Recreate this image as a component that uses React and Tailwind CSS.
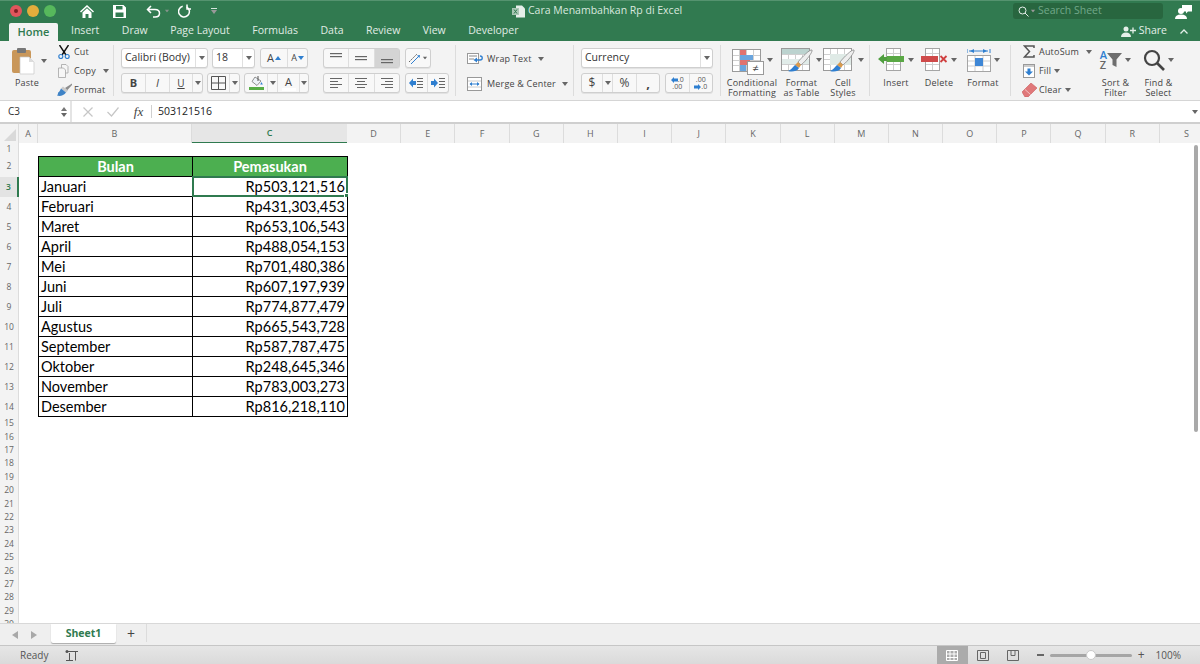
const ui = { fontFamily: '"Open Sans", "Noto Sans", sans-serif' };

const columns = ["D", "E", "F", "G", "H", "I", "J", "K", "L", "M", "N", "O", "P", "Q", "R", "S"];

const income = [
  ["Januari", "Rp503,121,516"],
  ["Februari", "Rp431,303,453"],
  ["Maret", "Rp653,106,543"],
  ["April", "Rp488,054,153"],
  ["Mei", "Rp701,480,386"],
  ["Juni", "Rp607,197,939"],
  ["Juli", "Rp774,877,479"],
  ["Agustus", "Rp665,543,728"],
  ["September", "Rp587,787,475"],
  ["Oktober", "Rp248,645,346"],
  ["November", "Rp783,003,273"],
  ["Desember", "Rp816,218,110"],
];

const emptyRows = [15, 16, 17, 18, 19, 20, 21, 22, 23, 24, 25, 26, 27, 28, 29, 30];

function Caret({ className = "" }) {
  return (
    <svg width="6" height="4" viewBox="0 0 6 4" className={`shrink-0 ${className}`}>
      <path d="M0 0h6L3 4z" fill="#666" />
    </svg>
  );
}

function Group({ className = "", children }) {
  return (
    <div className={`flex h-[20px] shrink-0 rounded-[3px] border border-[#cfcfcf] bg-[#f8f8f8] shadow-[0_1px_0_#e2e2e2] ${className}`}>
      {children}
    </div>
  );
}

function Cell({ className = "", active, children }) {
  return (
    <div className={`flex items-center justify-center border-r border-[#dedede] last:border-r-0 ${active ? "bg-[#d4d4d4]" : ""} ${className}`}>
      {children}
    </div>
  );
}

function Lines({ widths, align = "left", gap = 2, color = "#666" }) {
  return (
    <svg width="14" height="12" viewBox="0 0 14 12">
      {widths.map((w, i) => {
        const x = align === "left" ? 1 : align === "right" ? 13 - w : 7 - w / 2;
        return <rect key={i} x={x} y={1 + i * (gap + 1)} width={w} height="1" fill={color} />;
      })}
    </svg>
  );
}

function VAlign({ y }) {
  return (
    <svg width="14" height="14" viewBox="0 0 14 14">
      <rect x="1" y={y} width="12" height="1.2" fill="#666" />
      <rect x="1" y={y + 3} width="12" height="1.2" fill="#666" />
    </svg>
  );
}

function Indent({ flip }) {
  return (
    <svg width="16" height="12" viewBox="0 0 16 12">
      <path d={flip ? "M1 4h3V1.500l4 4.500-4 4.500V8H1z" : "M8 4H5V1.500L1 6l4 4.500V8h3z"} fill="#2f7fd0" />
      <path d="M9 1.500h6M9 4.500h6M9 7.500h6M9 10.500h6" stroke="#666" strokeWidth="1" />
    </svg>
  );
}

function SmallRow({ icon, label, caret, caretClass = "ml-[7px]" }) {
  return (
    <div className="flex h-[19px] items-center">
      <div className="flex w-[18px] shrink-0 justify-center">{icon}</div>
      <span className="ml-[1px] text-[9px] tracking-[0.2px] text-[#444]">{label}</span>
      {caret && <Caret className={caretClass} />}
    </div>
  );
}

function Big({ className = "", icon, caret = true, label }) {
  return (
    <div className={`flex shrink-0 flex-col items-center ${className}`}>
      <div className="flex h-[37px] items-center">
        {icon}
        {caret && <Caret className="ml-[3px]" />}
      </div>
      {label.map((line) => (
        <span key={line} className="whitespace-nowrap text-[9px] leading-[10px] tracking-[0.2px] text-[#444]">
          {line}
        </span>
      ))}
    </div>
  );
}

function Sep({ className = "" }) {
  return <div className={`mt-[4px] h-[51px] w-[1px] shrink-0 bg-[#dcdcdc] ${className}`} />;
}

function MiniGrid({ className = "", children }) {
  return (
    <svg width="32" height="26" viewBox="0 0 32 26" className={className}>
      <rect x="0.500" y="0.500" width="28" height="22" fill="#fff" stroke="#9a9a9a" />
      <path d="M7.500 1v21M14.500 1v21M21.500 1v21M1 6.500h27M1 11.500h27M1 16.500h27" stroke="#cfcfcf" />
      {children}
    </svg>
  );
}

function Brush() {
  return (
    <g>
      <path d="M31 2c1 2-6 11-11 15l-3-3C21 9 29 1 31 2z" fill="#eeeeee" stroke="#8a8a8a" strokeWidth="0.800" />
      <path d="M17 14l3 3-2 3-4-3z" fill="#d99a4c" />
      <path d="M14 17l4 3c-2 4-8 4-11 3 3-1 4-3 7-6z" fill="#2f7fd0" />
    </g>
  );
}

function TitleBar() {
  return (
    <div className="flex h-[21px] items-center border-t border-[#55936f]">
      <div className="flex w-[512px] shrink-0 items-center">
        <div className="ml-[10px] flex gap-[5px]">
          <div className="flex size-[12px] items-center justify-center rounded-full bg-[#e0555c]">
            <div className="size-[4px] rounded-full bg-[#7d1f24]" />
          </div>
          <div className="size-[12px] rounded-full bg-[#e4ad3c]" />
          <div className="size-[12px] rounded-full bg-[#57b85c]" />
        </div>
        <svg width="14" height="13" viewBox="0 0 14 13" className="ml-[24px]">
          <path d="M7 0L0 6.500l1 1L7 2l6 5.500 1-1zM2.500 7.500V13h3V9h3v4h3V7.500L7 3.300z" fill="#fff" />
        </svg>
        <svg width="13" height="13" viewBox="0 0 13 13" className="ml-[19px]">
          <path fillRule="evenodd" d="M0 0h10.500L13 2.500V13H0zM3 1v3.500h6.500V1zM2.500 7.500V12h8V7.500z" fill="#fff" />
        </svg>
        <svg width="15" height="13" viewBox="0 0 15 13" fill="none" className="ml-[20px]">
          <path d="M5 1L1.500 4.500 5 8M2 4.500h7c6 0 6 7.500 0 7.500H7" stroke="#fff" strokeWidth="1.500" />
        </svg>
        <Caret className="ml-[3px] scale-75 opacity-80 invert" />
        <svg width="13" height="14" viewBox="0 0 13 14" fill="none" className="ml-[8px]">
          <path d="M4 2.600a5.400 5.400 0 1 0 4 0" stroke="#fff" strokeWidth="1.500" transform="rotate(8 6.500 7.500)" />
          <path d="M9 0.500v4.500H13" stroke="#fff" strokeWidth="1.500" />
        </svg>
        <div className="ml-[20px] flex flex-col items-center gap-[1px]">
          <div className="h-[1px] w-[6px] bg-white/80" />
          <Caret className="invert" />
        </div>
      </div>
      <div className="flex w-[501px] shrink-0 items-center">
        <svg width="13" height="13" viewBox="0 0 13 13" className="shrink-0">
          <path d="M4 .500h6L13 3.500v9H4z" fill="#e6eee9" />
          <rect x="0" y="3" width="7" height="7" fill="#a9c7b5" />
          <path d="M2 4.500l3 4M5 4.500l-3 4" stroke="#2f7a4f" />
        </svg>
        <span className="ml-[3px] text-[10.5px] text-[#d9e8df]">Cara Menambahkan Rp di Excel</span>
      </div>
      <div className="flex h-[16px] w-[150px] shrink-0 items-center rounded-[3px] bg-[#28663f] pl-[5px]">
        <svg width="11" height="11" viewBox="0 0 11 11" fill="none">
          <circle cx="4.500" cy="4.500" r="3.500" stroke="#e5efe9" />
          <path d="M7 7l3.500 3.500" stroke="#e5efe9" />
        </svg>
        <Caret className="ml-[1px] scale-75 invert" />
        <span className="ml-[2px] text-[10.5px] text-[#72a88a]">Search Sheet</span>
      </div>
      <svg width="17" height="15" viewBox="0 0 17 15" className="ml-[12px]">
        <path d="M7 1h10v6.500h-4L11 9.500V7.500H7z" fill="#fff" />
        <circle cx="6" cy="7" r="3" fill="#fff" />
        <path d="M0 15c0-3 2-4.500 6-4.500s6 1.500 6 4.500z" fill="#fff" />
      </svg>
    </div>
  );
}

function TabRow() {
  return (
    <div className="flex h-[20px] items-end">
      <div className="ml-[9px] flex h-[18px] w-[49px] items-center justify-center rounded-t-[2px] bg-[#f3f3f3] text-[11px] font-semibold text-[#2f7a4f]">
        Home
      </div>
      <div className="ml-[13px] flex h-[20px] items-center gap-[22.5px] text-[10.5px] text-[#e0ece5]">
        <span>Insert</span>
        <span>Draw</span>
        <span>Page Layout</span>
        <span>Formulas</span>
        <span>Data</span>
        <span>Review</span>
        <span>View</span>
        <span>Developer</span>
      </div>
      <div className="ml-auto mr-[12px] flex h-[20px] items-center">
        <svg width="15" height="11" viewBox="0 0 15 11">
          <circle cx="5" cy="3" r="2.500" fill="#e4efe8" />
          <path d="M0 11c0-3 2-4.500 5-4.500s5 1.500 5 4.500z" fill="#e4efe8" />
          <path d="M9 4.500h6M12 1.500v6" stroke="#e4efe8" strokeWidth="1.300" />
        </svg>
        <span className="ml-[3px] text-[10.5px] text-[#e4efe8]">Share</span>
        <svg width="8" height="5" viewBox="0 0 8 5" fill="none" className="ml-[13px]">
          <path d="M.500 4.500L4 1l3.500 3.500" stroke="#e4efe8" strokeWidth="1.300" />
        </svg>
      </div>
    </div>
  );
}

function Clipboard() {
  return (
    <div className="flex w-[113px] shrink-0">
      <div className="w-[55px] shrink-0">
        <div className="ml-[12px] flex h-[37px] items-center">
          <svg width="23" height="27" viewBox="0 0 23 27" className="mt-[4px]">
            <rect x="0" y="2" width="19" height="23" rx="2" fill="#c9975a" />
            <rect x="5" y="0" width="9" height="5" rx="1" fill="#777" />
            <path d="M8 9h9l5 5v12H8z" fill="#fff" stroke="#c7c7c7" strokeWidth="0.700" />
            <path d="M17 9v5h5z" fill="#ddd" />
          </svg>
          <Caret className="ml-[6px] mt-[3px]" />
        </div>
        <div className="ml-[15px] text-[9px] leading-[10px] tracking-[0.2px] text-[#444]">Paste</div>
      </div>
      <div className="mt-[1px] flex flex-col">
        <SmallRow
          label="Cut"
          icon={
            <svg width="12" height="14" viewBox="0 0 12 14" fill="none">
              <path d="M1.500 0l6.500 10M10.500 0L4 10" stroke="#111" strokeWidth="1.400" />
              <circle cx="2.800" cy="11.500" r="2" stroke="#2f7fd0" strokeWidth="1.200" />
              <circle cx="9.200" cy="11.500" r="2" stroke="#2f7fd0" strokeWidth="1.200" />
            </svg>
          }
        />
        <SmallRow
          label="Copy"
          caret
          icon={
            <svg width="13" height="14" viewBox="0 0 13 14" fill="#f6f6f6" stroke="#a5a5a5" strokeWidth="0.800">
              <path d="M3.500 .500H8L10 2.500V9H3.500z" />
              <path d="M.500 4h5l2 2v7.500h-7z" />
            </svg>
          }
        />
        <SmallRow
          label="Format"
          icon={
            <svg width="15" height="13" viewBox="0 0 15 13">
              <path d="M15 .500L8 5l2 2.500L15 2z" fill="#8d8d8d" />
              <path d="M6 3.500l5 4-2 2-5-4z" fill="#c9c9c9" />
              <path d="M4 5.500l5 4c-2 3-6 4-9 3 1-1 1-2 1-3 1 0 2-2 3-4z" fill="#3f83c6" />
            </svg>
          }
        />
      </div>
    </div>
  );
}

function FontBlock() {
  return (
    <div className="ml-[7px] mt-[7px] flex w-[188px] shrink-0 flex-col gap-[5px]">
      <div className="flex">
        <Group className="w-[87px] bg-white">
          <div className="flex flex-1 items-center border-r border-[#e0e0e0] pl-[3px] text-[10.500px] text-[#333]">Calibri (Body)</div>
          <div className="flex w-[11px] items-center justify-center"><Caret /></div>
        </Group>
        <Group className="ml-[4px] w-[43px] bg-white">
          <div className="flex flex-1 items-center border-r border-[#e0e0e0] pl-[3px] text-[10.500px] text-[#333]">18</div>
          <div className="flex w-[11px] items-center justify-center"><Caret /></div>
        </Group>
        <Group className="ml-[5px] w-[48px]">
          <Cell className="w-[27px] gap-[1px]">
            <span className="text-[11px] text-[#444]">A</span>
            <svg width="6" height="4" viewBox="0 0 6 4"><path d="M3 0l3 4H0z" fill="#2f7fd0" /></svg>
          </Cell>
          <Cell className="flex-1 gap-[1px]">
            <span className="text-[9px] text-[#444]">A</span>
            <svg width="6" height="4" viewBox="0 0 6 4"><path d="M0 0h6L3 4z" fill="#2f7fd0" /></svg>
          </Cell>
        </Group>
      </div>
      <div className="flex">
        <Group className="w-[82px]">
          <Cell className="w-[24px] text-[11px] font-bold text-[#444]">B</Cell>
          <Cell className="w-[24px] text-[11px] italic text-[#444]" >I</Cell>
          <Cell className="w-[23px] text-[10px] text-[#444] underline">U</Cell>
          <Cell className="flex-1"><Caret /></Cell>
        </Group>
        <Group className="ml-[4px] w-[33px]">
          <Cell className="w-[22px]">
            <svg width="15" height="14" viewBox="0 0 15 14" fill="none" stroke="#555">
              <path d="M.500 .500h14v13H.500zM7.500 .500v13M.500 7h14" />
            </svg>
          </Cell>
          <Cell className="flex-1"><Caret /></Cell>
        </Group>
        <Group className="ml-[4px] w-[65px]">
          <Cell className="w-[23px] flex-col">
            <svg width="13" height="10" viewBox="0 0 13 10">
              <path d="M5 1l6 4-4 4.500-5-4z" fill="#eef3f8" stroke="#777" strokeWidth="0.800" />
              <path d="M8 0v5" stroke="#555" />
              <path d="M11.500 6l1.300 2.500h-2.600z" fill="#2f7fd0" />
            </svg>
            <div className="mt-[1px] h-[3px] w-[15px] bg-[#57ad45]" />
          </Cell>
          <Cell className="w-[10px]"><Caret /></Cell>
          <Cell className="w-[22px] flex-col">
            <span className="text-[11px] leading-[12px] text-[#444]">A</span>
            <div className="h-[3px] w-[14px] bg-white" />
          </Cell>
          <Cell className="flex-1"><Caret /></Cell>
        </Group>
      </div>
    </div>
  );
}

function AlignBlock() {
  return (
    <div className="ml-[14px] mt-[7px] flex w-[126px] shrink-0 flex-col gap-[5px]">
      <div className="flex">
        <Group className="w-[77px]">
          <Cell className="flex-1"><VAlign y={2} /></Cell>
          <Cell className="flex-1"><VAlign y={5} /></Cell>
          <Cell className="flex-1" active><VAlign y={8} /></Cell>
        </Group>
        <Group className="ml-[5px] w-[26px] items-center justify-center gap-[1px]">
          <svg width="13" height="13" viewBox="0 0 13 13" fill="none">
            <path d="M1 10L9 2" stroke="#666" strokeDasharray="2 1" />
            <path d="M3 12l8-8" stroke="#2f7fd0" />
            <path d="M12 3l-3 .5 2.500 2.500z" fill="#2f7fd0" />
          </svg>
          <Caret className="scale-75" />
        </Group>
      </div>
      <div className="flex">
        <Group className="w-[77px]">
          <Cell className="flex-1"><Lines widths={[12, 8, 12, 8]} /></Cell>
          <Cell className="flex-1"><Lines widths={[12, 8, 12, 8]} align="center" /></Cell>
          <Cell className="flex-1"><Lines widths={[12, 8, 12, 8]} align="right" /></Cell>
        </Group>
        <Group className="ml-[5px] w-[44px]">
          <Cell className="flex-1"><Indent /></Cell>
          <Cell className="flex-1"><Indent flip /></Cell>
        </Group>
      </div>
    </div>
  );
}

function WrapBlock() {
  return (
    <div className="ml-[11px] mt-[8px] flex w-[106px] shrink-0 flex-col gap-[6px]">
      <div className="flex h-[19px] items-center">
        <svg width="17" height="12" viewBox="0 0 17 12" fill="none">
          <rect x=".500" y=".500" width="11" height="10" fill="#fff" stroke="#999" />
          <path d="M2 3h8M2 6h5" stroke="#888" />
          <path d="M8 7h5c3 0 3-4 0-4" stroke="#2f7fd0" strokeWidth="1.300" />
          <path d="M10 4.500v5L6.500 7z" fill="#2f7fd0" />
        </svg>
        <span className="ml-[3px] text-[9px] tracking-[0.2px] text-[#444]">Wrap Text</span>
        <Caret className="ml-[6px]" />
      </div>
      <div className="flex h-[19px] items-center">
        <svg width="15" height="14" viewBox="0 0 15 14" fill="none" className="mr-[2px]">
          <rect x=".500" y=".500" width="14" height="13" fill="#fff" stroke="#999" />
          <path d="M1 4h13M1 10h13" stroke="#ccc" />
          <path d="M3 7h9" stroke="#2f7fd0" />
          <path d="M5 5v4L2.500 7zM10 5v4l2.500-2z" fill="#2f7fd0" />
        </svg>
        <span className="ml-[3px] text-[9px] tracking-[0.2px] text-[#444]">Merge &amp; Center</span>
        <Caret className="ml-[6px]" />
      </div>
    </div>
  );
}

function NumberBlock() {
  return (
    <div className="ml-[7px] mt-[7px] flex w-[132px] shrink-0 flex-col gap-[5px]">
      <Group className="w-[132px] bg-white">
        <div className="flex flex-1 items-center border-r border-[#e0e0e0] pl-[3px] text-[10.500px] text-[#333]">Currency</div>
        <div className="flex w-[11px] items-center justify-center"><Caret /></div>
      </Group>
      <div className="flex">
        <Group className="w-[79px]">
          <Cell className="w-[21px] text-[12px] text-[#444]">$</Cell>
          <Cell className="w-[10px]"><Caret /></Cell>
          <Cell className="w-[24px] text-[12px] text-[#444]">%</Cell>
          <Cell className="flex-1 text-[13px] font-bold leading-[10px] text-[#444]">,</Cell>
        </Group>
        <Group className="ml-[5px] w-[48px]">
          <Cell className="flex-1 flex-col text-[7px] leading-[7px] text-[#555]">
            <span className="flex items-center">
              <svg width="7" height="6" viewBox="0 0 7 6"><path d="M0 3l3-3v1.500h4v3H3V6z" fill="#2f7fd0" /></svg>.0
            </span>
            <span>.00</span>
          </Cell>
          <Cell className="flex-1 flex-col text-[7px] leading-[7px] text-[#555]">
            <span>.00</span>
            <span className="flex items-center">
              <svg width="7" height="6" viewBox="0 0 7 6"><path d="M7 3L4 0v1.500H0v3h4V6z" fill="#2f7fd0" /></svg>.0
            </span>
          </Cell>
        </Group>
      </div>
    </div>
  );
}

function StylesBlock() {
  return (
    <>
      <Big
        className="ml-[7px] w-[48px]"
        label={["Conditional", "Formatting"]}
        icon={
          <MiniGrid className="mt-[5px]">
            <rect x="8" y="1" width="6" height="5" fill="#e0726f" />
            <rect x="8" y="6" width="13" height="5" fill="#6aa5de" />
            <rect x="8" y="11" width="10" height="5" fill="#e0726f" />
            <rect x="8" y="16" width="6" height="6" fill="#6aa5de" />
            <rect x="15.500" y="12.500" width="16" height="13" fill="#fff" stroke="#999" />
            <text x="23.500" y="23" textAnchor="middle" fontSize="11" fill="#444" style={ui}>≠</text>
          </MiniGrid>
        }
      />
      <Big
        className="ml-[4px] w-[43px]"
        label={["Format", "as Table"]}
        icon={
          <MiniGrid className="mt-[3px]">
            <rect x="1" y="1" width="27" height="5" fill="#bcd3cf" />
            <rect x="1" y="11" width="27" height="5" fill="#e1ece9" />
            <Brush />
          </MiniGrid>
        }
      />
      <Big
        className="ml-[2px] w-[36px]"
        label={["Cell", "Styles"]}
        icon={
          <MiniGrid className="mt-[3px]">
            <rect x="7" y="6" width="21" height="11" fill="#dfeae6" />
            <Brush />
          </MiniGrid>
        }
      />
    </>
  );
}

function InsertIcon() {
  return (
    <svg width="27" height="23" viewBox="0 0 27 23">
      <rect x="8.500" y=".500" width="14" height="22" fill="#fff" stroke="#a5a5a5" />
      <path d="M15.500 1v21M9 5.500h13M9 16.500h13" stroke="#cfcfcf" />
      <rect x="9" y="8" width="17" height="6" fill="#5aa845" />
      <path d="M0 11l6-5v3h3v4H6v3z" fill="#4f9e3f" />
    </svg>
  );
}

function DeleteIcon() {
  return (
    <svg width="27" height="23" viewBox="0 0 27 23">
      <rect x="4.500" y=".500" width="14" height="22" fill="#fff" stroke="#a5a5a5" />
      <path d="M11.500 1v21M5 5.500h13M5 16.500h13" stroke="#cfcfcf" />
      <rect x="0" y="8" width="17" height="6" fill="#cf4a4a" />
      <path d="M19.500 8l6 6M25.500 8l-6 6" stroke="#cf3f3f" strokeWidth="1.800" />
    </svg>
  );
}

function FormatIcon() {
  return (
    <svg width="24" height="24" viewBox="0 0 24 24">
      <path d="M0 1v4M23 1v4M2 3h19" stroke="#2f7fd0" />
      <path d="M7 1l-4 2 4 2zM16 1l4 2-4 2z" fill="#2f7fd0" />
      <rect x=".500" y="7.500" width="23" height="16" fill="#fff" stroke="#a5a5a5" />
      <path d="M8 8v15M16 8v15M1 13h22M1 18h22" stroke="#cfcfcf" />
      <rect x="8" y="10" width="8" height="8" fill="#3f87d6" />
    </svg>
  );
}

function CellsBlock() {
  return (
    <>
      <Big className="ml-[6px] w-[40px]" label={["Insert"]} icon={<InsertIcon />} />
      <Big className="ml-[3px] w-[40px]" label={["Delete"]} icon={<DeleteIcon />} />
      <Big className="ml-[4px] w-[40px]" label={["Format"]} icon={<FormatIcon />} />
    </>
  );
}

function EditBlock() {
  return (
    <>
      <div className="ml-[9px] mt-[1px] flex w-[75px] shrink-0 flex-col">
        <SmallRow
          label="AutoSum"
          caret
          icon={
            <svg width="12" height="13" viewBox="0 0 12 13" fill="none">
              <path d="M11 3V1H1.500L6.500 6.500 1.500 12H11v-2" stroke="#555" strokeWidth="1.500" />
            </svg>
          }
        />
        <SmallRow
          label="Fill"
          caret
          caretClass="ml-[3px]"
          icon={
            <svg width="12" height="14" viewBox="0 0 12 14">
              <rect x=".500" y=".500" width="11" height="13" fill="#fff" stroke="#999" />
              <rect x="1" y="1" width="10" height="2" fill="#ccc" />
              <path d="M4.500 4.500h3v3H10L6 11.500 2 7.500h2.500z" fill="#2f7fd0" />
            </svg>
          }
        />
        <SmallRow
          label="Clear"
          caret
          caretClass="ml-[3px]"
          icon={
            <svg width="15" height="14" viewBox="0 0 15 14">
              <path d="M0 9l9-9 6 5-9 9H3z" fill="#e0787a" stroke="#c95c5e" strokeWidth="0.600" />
              <path d="M3 6.500l5.500 5" stroke="#f4c5c5" />
            </svg>
          }
        />
      </div>
      <Big
        className="ml-[2px] w-[37px]"
        label={["Sort &", "Filter"]}
        icon={
          <div className="flex items-center">
            <div className="flex flex-col text-[11px] font-semibold leading-[10px]">
              <span className="text-[#2f7fd0]">A</span>
              <span className="text-[#666]">Z</span>
            </div>
            <svg width="15" height="15" viewBox="0 0 15 15">
              <path d="M0 1h15L9.500 7.500V15L5.500 13V7.500z" fill="#6e6e6e" />
            </svg>
          </div>
        }
      />
      <Big
        className="ml-[6px] w-[37px]"
        label={["Find &", "Select"]}
        icon={
          <svg width="22" height="22" viewBox="0 0 22 22" fill="none">
            <circle cx="9" cy="9" r="7" stroke="#444" strokeWidth="2.200" />
            <path d="M14 14l7 7" stroke="#444" strokeWidth="2.600" />
          </svg>
        }
      />
    </>
  );
}

function Ribbon() {
  return (
    <div className="flex h-[59px] bg-[#f3f3f3]">
      <Clipboard />
      <Sep />
      <FontBlock />
      <AlignBlock />
      <Sep className="ml-[6px]" />
      <WrapBlock />
      <Sep />
      <NumberBlock />
      <Sep className="ml-[7px]" />
      <StylesBlock />
      <Sep className="ml-[8px]" />
      <CellsBlock />
      <Sep className="ml-[7px]" />
      <EditBlock />
    </div>
  );
}

function FormulaBar() {
  return (
    <div className="flex h-[24px] border-t border-[#d5d5d5] border-b-2 border-b-[#cfcfcf] bg-white">
      <div className="flex w-[70px] shrink-0 items-center pl-[8px] text-[10px] text-[#333]">
        C3
        <div className="ml-auto mr-[3px] flex flex-col gap-[2px]">
          <svg width="6" height="4" viewBox="0 0 6 4"><path d="M3 0l3 4H0z" fill="#777" /></svg>
          <Caret />
        </div>
      </div>
      <div className="w-[2px] shrink-0 bg-[#e4e4e4]" />
      <div className="flex flex-1 items-center">
        <svg width="10" height="10" viewBox="0 0 10 10" fill="none" className="ml-[11px]">
          <path d="M.500 .500l9 9M9.500 .500l-9 9" stroke="#c6c6c6" strokeWidth="1.200" />
        </svg>
        <svg width="12" height="10" viewBox="0 0 12 10" fill="none" className="ml-[14px]">
          <path d="M.500 5l4 4 7-8.500" stroke="#c6c6c6" strokeWidth="1.200" />
        </svg>
        <span className="ml-[8px] w-[23px] text-center text-[13px] italic text-[#444]" style={{ fontFamily: '"Liberation Serif", serif' }}>fx</span>
        <div className="ml-[1px] h-[13px] w-[1px] bg-[#cfcfcf]" />
        <span className="ml-[6px] text-[10.500px] text-[#222]">503121516</span>
        <Caret className="ml-auto mr-[2px]" />
      </div>
    </div>
  );
}

function ColumnHeader() {
  return (
    <div className="flex h-[19px] bg-[#f3f3f3] text-[9px] text-[#666]">
      <div className="flex w-[19px] shrink-0 items-end justify-end border-r border-[#dcdcdc] pb-[2px] pr-[2px]">
        <svg width="12" height="12" viewBox="0 0 12 12"><path d="M12 0v12H0z" fill="#d9d9d9" /></svg>
      </div>
      <div className="flex w-[19px] shrink-0 items-center justify-center border-r border-[#dcdcdc]">A</div>
      <div className="flex w-[154px] shrink-0 items-center justify-center border-r border-[#dcdcdc]">B</div>
      <div className="flex w-[155px] shrink-0 items-center justify-center border-b-[1.500px] border-[#2f7a4f] bg-[#e6e6e6] font-semibold text-[#2f7a4f]">C</div>
      {columns.map((c) => (
        <div key={c} className="flex w-[54.200px] shrink-0 items-center justify-center border-r border-[#dcdcdc]">{c}</div>
      ))}
    </div>
  );
}

function RowLabel({ n, active }) {
  return (
    <div
      className={`flex w-[19px] shrink-0 items-center justify-center border-r text-[8.500px] ${
        active ? "border-r-2 border-r-[#2f7a4f] bg-[#e3e3e3] font-semibold text-[#2f7a4f]" : "border-[#dcdcdc] bg-[#f3f3f3] text-[#666]"
      }`}
    >
      {n}
    </div>
  );
}

function Sheet() {
  const table = { fontFamily: 'Lato, "Open Sans", sans-serif' };
  return (
    <div className="relative flex-1 overflow-hidden bg-white">
      <div className="flex h-[13px]"><RowLabel n={1} /></div>
      <div className="flex h-[21px]">
        <RowLabel n={2} />
        <div className="w-[19px] shrink-0" />
        <div style={table} className="flex w-[155px] shrink-0 items-center justify-center border border-black bg-[#4caf50] text-[14.500px] font-bold text-white">
          Bulan
        </div>
        <div style={table} className="flex w-[155px] shrink-0 items-center justify-center border-y border-r border-black bg-[#4caf50] text-[14.500px] font-bold text-white">
          Pemasukan
        </div>
      </div>
      {income.map(([month, value], i) => (
        <div key={month} className="flex h-[20px]">
          <RowLabel n={i + 3} active={i === 0} />
          <div className="w-[19px] shrink-0" />
          <div style={table} className="flex w-[155px] shrink-0 items-center border-x border-b border-black pl-[2px] text-[14.500px] text-black">
            {month}
          </div>
          <div style={table} className="relative flex w-[155px] shrink-0 items-center justify-end border-r border-b border-black pr-[2px] text-[14.500px] text-black">
            {value}
            {i === 0 && (
              <div className="absolute -left-[1px] -right-[1px] -top-[1px] -bottom-[1px] border-2 border-[#2f7a4f]">
                <div className="absolute -bottom-[3px] -right-[3px] size-[5px] border border-white bg-[#2f7a4f]" />
              </div>
            )}
          </div>
        </div>
      ))}
      {emptyRows.map((n) => (
        <div key={n} className="flex h-[13.400px]"><RowLabel n={n} /></div>
      ))}
      <div className="absolute right-[2px] top-[2px] h-[287px] w-[4px] rounded-full bg-[#a9a9a9]" />
    </div>
  );
}

function TabsBar() {
  return (
    <div className="flex h-[22px] border-t border-[#d8d8d8] bg-[#efefef]">
      <svg width="6" height="8" viewBox="0 0 6 8" className="ml-[12px] mt-[7px]"><path d="M6 0v8L0 4z" fill="#a8a8a8" /></svg>
      <svg width="6" height="8" viewBox="0 0 6 8" className="ml-[13px] mt-[7px]"><path d="M0 0v8l6-4z" fill="#a8a8a8" /></svg>
      <div className="ml-[14px] flex h-[19px] w-[65px] items-center justify-center rounded-b-[2px] bg-white text-[10.500px] font-bold text-[#2f7a4f] shadow-[0_1px_1px_#aaa]">
        Sheet1
      </div>
      <span className="ml-[11px] mt-[1px] text-[14px] leading-[18px] text-[#444]">+</span>
      <div className="ml-[11px] h-[18px] w-[1px] bg-[#dcdcdc]" />
    </div>
  );
}

function StatusBar() {
  return (
    <div className="flex h-[19px] items-center border-t border-[#c6c6c6] bg-gradient-to-b from-[#e6e6e6] to-[#dadada] text-[10px] text-[#555]">
      <span className="ml-[20px]">Ready</span>
      <svg width="14" height="13" viewBox="0 0 14 13" fill="none" className="ml-[17px]">
        <circle cx="2" cy="2.500" r="1.500" fill="#555" />
        <path d="M3 2.500h10M10.500 2.500v9M1 11.500h7M4.500 4v7.500" stroke="#555" />
      </svg>
      <div className="ml-auto flex h-full w-[31px] items-center justify-center bg-[#ababab]">
        <svg width="12" height="11" viewBox="0 0 12 11" fill="none" stroke="#fff">
          <path d="M.500 .500h11v10H.500zM4 .500v10M8 .500v10M.500 4h11M.500 7.500h11" />
        </svg>
      </div>
      <div className="flex w-[30px] justify-center">
        <svg width="12" height="11" viewBox="0 0 12 11" fill="none" stroke="#666">
          <path d="M.500 .500h11v10H.500z" />
          <path d="M3.500 2.500h5v6h-5z" />
        </svg>
      </div>
      <div className="flex w-[30px] justify-center">
        <svg width="12" height="11" viewBox="0 0 12 11" fill="none" stroke="#666">
          <path d="M.500 .500h11v10H.500zM4 .500v5h4v-5" />
        </svg>
      </div>
      <div className="ml-[9px] h-[1.500px] w-[7px] bg-[#666]" />
      <div className="relative ml-[6px] h-[3px] w-[82px] rounded-full bg-[#a5a5a5]">
        <div className="absolute left-[36px] -top-[3.500px] size-[10px] rounded-full border border-[#c9c9c9] bg-white" />
      </div>
      <span className="ml-[6px] text-[12px] leading-[12px] text-[#555]">+</span>
      <span className="ml-[11px] mr-[19px] text-[10px]">100%</span>
    </div>
  );
}

export default function App() {
  return (
    <div className="flex h-[664px] w-[1200px] flex-col overflow-hidden bg-white" style={ui}>
      <div className="bg-[#317a50]">
        <TitleBar />
        <TabRow />
      </div>
      <Ribbon />
      <FormulaBar />
      <ColumnHeader />
      <Sheet />
      <TabsBar />
      <StatusBar />
    </div>
  );
}
